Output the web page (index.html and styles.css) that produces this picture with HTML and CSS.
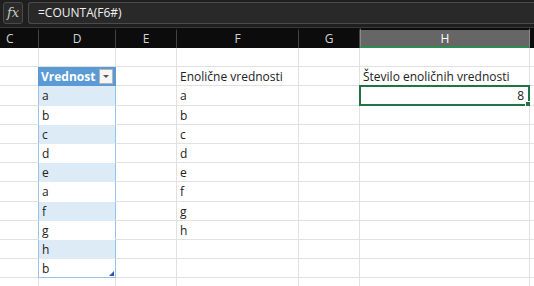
FILE: index.html
```html
<!DOCTYPE html>
<html lang="sl">
<head>
    <meta charset="UTF-8">
    <title>Število enoličnih vrednosti</title>
    <link rel="stylesheet" href="styles.css">
</head>
<body>
    <div class="formula-bar">
        <div class="fx">fx</div>
        <div class="formula">=COUNTA(F6#)</div>
    </div>

    <div class="sheet">
        <!-- column headers -->
        <div class="col-head">C</div>
        <div class="col-head">D</div>
        <div class="col-head">E</div>
        <div class="col-head">F</div>
        <div class="col-head">G</div>
        <div class="col-head active">H</div>
        <div class="col-head last"></div>
    </div>

    <div class="sheet grid" id="grid"></div>

    <script>
        const tableValues = ['a', 'b', 'c', 'd', 'e', 'a', 'f', 'g', 'h', 'b'];
        const unique = ['a', 'b', 'c', 'd', 'e', 'f', 'g', 'h'];
        const grid = document.getElementById('grid');

        function cell(text, cls) {
            const div = document.createElement('div');
            div.className = 'cell' + (cls ? ' ' + cls : '');
            div.textContent = text || '';
            grid.appendChild(div);
            return div;
        }

        // 13 rows: one empty, header row, then 10 data rows, one spare
        for (let r = 0; r < 13; r++) {
            const di = r - 2;
            cell('');

            if (r === 1) {
                const h = cell('Vrednost', 'tbl tbl-head');
                const btn = document.createElement('span');
                btn.className = 'filter';
                h.appendChild(btn);
            } else if (di >= 0 && di < tableValues.length) {
                const c = cell(tableValues[di], 'tbl ' + (di % 2 === 0 ? 'band' : 'plain'));
                if (di === tableValues.length - 1) c.classList.add('tbl-end');
            } else {
                cell('');
            }

            cell('');

            if (r === 1) cell('Enolične vrednosti');
            else if (di >= 0 && di < unique.length) cell(unique[di]);
            else cell('');

            cell('');

            if (r === 1) cell('Število enoličnih vrednosti');
            else if (r === 2) cell('8', 'num selected');
            else cell('');

            cell('', 'last');
        }
    </script>
</body>
</html>
```

FILE: styles.css
```css
body {
    margin: 0;
    background: #ffffff;
    font-family: "Open Sans", "Noto Sans", sans-serif;
    overflow: hidden;
}
.formula-bar {
    display: flex;
    gap: 5px;
    height: 28px;
    padding: 2px 0 0 3px;
    box-sizing: border-box;
    background: #1f1f1f;
    border-bottom: 1px solid #3a3a3a;
}
.fx {
    width: 20px;
    height: 22px;
    box-sizing: border-box;
    border: 1px solid #4a4a4a;
    border-radius: 3px;
    background: #2a2a2a;
    color: #c8c8c8;
    font-family: "DejaVu Serif", serif;
    font-style: italic;
    font-size: 13px;
    line-height: 19px;
    text-align: center;
}
.formula {
    flex: 1;
    height: 22px;
    box-sizing: border-box;
    border: 1px solid #4a4a4a;
    border-right: none;
    border-radius: 3px 0 0 3px;
    background: #292929;
    color: #f0f0f0;
    font-size: 12px;
    line-height: 20px;
    padding-left: 9px;
}
.sheet {
    display: grid;
    grid-template-columns: 39px 77px 61px 122px 61px 170px 1fr;
}
.col-head {
    height: 20px;
    background: #0c0c0c;
    color: #d4d4d4;
    font-size: 12px;
    line-height: 20px;
    text-align: center;
    box-sizing: border-box;
    border-right: 1px solid #444;
    border-top: 3px solid #0c0c0c;
    line-height: 16px;
}
.col-head:first-child {
    text-align: left;
    padding-left: 6px;
}
.col-head.active {
    background: #666666;
    border: 1px solid #8a8a8a;
    border-bottom: 2px solid #2f8a55;
    border-top: 2px solid #0c0c0c;
    line-height: 17px;
    color: #ffffff;
}
.col-head.last {
    border-right: none;
}
.grid {
    grid-auto-rows: 19.2px;
}
.cell {
    position: relative;
    box-sizing: border-box;
    border-right: 1px solid #e1e1e1;
    border-bottom: 1px solid #e1e1e1;
    padding-left: 3px;
    font-size: 12px;
    line-height: 19px;
    color: #222;
    white-space: nowrap;
}
.cell.last {
    border-right: none;
}
.tbl {
    border-left: 1px solid #9bc2e6;
    border-right: 1px solid #9bc2e6;
    margin-left: -1px;
}
.band {
    background: #ddebf7;
    border-bottom-color: #ddebf7;
}
.plain {
    border-bottom-color: #ffffff;
}
.tbl-end {
    border-bottom: 1px solid #9bc2e6;
}
.tbl-end::after {
    content: "";
    position: absolute;
    right: 1px;
    bottom: 1px;
    border-left: 5px solid transparent;
    border-bottom: 5px solid #3355a8;
}
.tbl-head {
    background: #5b9bd5;
    border-color: #5b9bd5;
    color: #ffffff;
    font-weight: bold;
    padding-left: 2px;
}
.filter {
    position: absolute;
    right: 2px;
    top: 2px;
    width: 14px;
    height: 15px;
    box-sizing: border-box;
    background: #f5f5f5;
    border: 1px solid #b5b5b5;
}
.filter::after {
    content: "";
    position: absolute;
    left: 3px;
    top: 5px;
    border-left: 3px solid transparent;
    border-right: 3px solid transparent;
    border-top: 3px solid #555;
}
.num {
    text-align: right;
    padding-right: 4px;
}
.selected {
    border: 2px solid #217346;
    margin: -1px 0 0 -1px;
    line-height: 17px;
}
.selected::after {
    content: "";
    position: absolute;
    right: -3px;
    bottom: -3px;
    width: 4px;
    height: 4px;
    background: #217346;
    border: 1px solid #ffffff;
}
```
